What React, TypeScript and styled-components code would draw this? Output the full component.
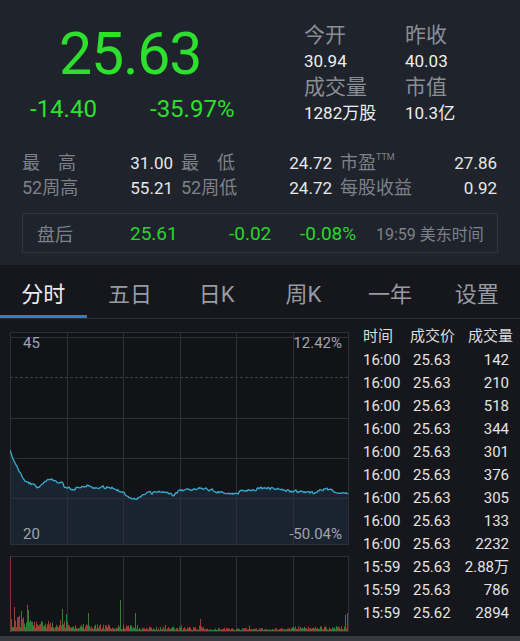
import styled, { createGlobalStyle } from "styled-components";

const GlobalStyle = createGlobalStyle`
  html, body {
    margin: 0;
    padding: 0;
    background: #15171c;
  }
  body {
    font-family: Roboto, "Noto Sans CJK SC", sans-serif;
  }
`;

const GREEN = "#2ee02e";
const W = 339;
const H = 213;
const VH = 76;

// seeded random so the chart is the same every run
function rng(seed: number) {
    let a = seed;
    return () => {
        a |= 0;
        a = (a + 0x6d2b79f5) | 0;
        let t = Math.imul(a ^ (a >>> 15), 1 | a);
        t = (t + Math.imul(t ^ (t >>> 7), 61 | t)) ^ t;
        return ((t ^ (t >>> 14)) >>> 0) / 4294967296;
    };
}

const keys: [number, number][] = [
    [0, 118], [3, 127], [9, 139], [15, 150], [20, 151], [28, 156], [35, 148], [45, 149],
    [52, 151], [55, 156], [63, 157], [73, 153], [90, 156], [103, 155], [115, 162], [125, 167],
    [137, 162], [153, 159], [163, 163], [170, 158], [190, 156], [223, 162], [235, 158],
    [257, 156], [280, 159], [303, 161], [315, 157], [338, 162],
];

function buildLine() {
    const r = rng(7);
    const pts: string[] = [];
    let k = 0;
    let n = 0;
    for (let x = 0; x <= W - 1; x += 1) {
        while (k < keys.length - 2 && keys[k + 1][0] < x) k++;
        const [x0, y0] = keys[k];
        const [x1, y1] = keys[k + 1];
        const t = Math.min(1, Math.max(0, (x - x0) / (x1 - x0)));
        n = n * 0.5 + (r() - 0.5) * 2.4;
        const y = y0 + (y1 - y0) * t + (x > 4 ? n : 0);
        pts.push(`${x},${y.toFixed(1)}`);
    }
    return pts;
}

const linePts = buildLine();

function buildBars() {
    const r = rng(31);
    const bars: { x: number; h: number; red: boolean }[] = [];
    const spikes: Record<number, number> = { 4: 24, 11: 20, 18: 21, 52: 22, 56: 17, 78: 18, 110: 31, 125: 18, 190: 12, 335: 16, 337: 18 };
    for (let x = 1; x < W - 1; x += 1) {
        const env = x < 20 ? 16 : x < 60 ? 11 : x < 130 ? 7 : x < 200 ? 4.5 : x < 280 ? 3 : 5;
        let h = env * (0.2 + r() * 0.8);
        if (r() > 0.94) h *= 1.8;
        if (spikes[x]) h = spikes[x];
        bars.push({ x, h: Math.max(1, h), red: r() > 0.5 });
    }
    return bars;
}

const bars = buildBars();
const vLines = [0, 1, 2, 3, 4, 5, 6].map((i) => Math.round((W / 6) * i));

const trades = [
    ["16:00", "25.63", "142"],
    ["16:00", "25.63", "210"],
    ["16:00", "25.63", "518"],
    ["16:00", "25.63", "344"],
    ["16:00", "25.63", "301"],
    ["16:00", "25.63", "376"],
    ["16:00", "25.63", "305"],
    ["16:00", "25.63", "133"],
    ["16:00", "25.63", "2232"],
    ["15:59", "25.63", "2.88万"],
    ["15:59", "25.63", "786"],
    ["15:59", "25.62", "2894"],
];

const tabs = ["分时", "五日", "日K", "周K", "一年", "设置"];

const Screen = styled.div`
    width: 520px;
    height: 641px;
    overflow: hidden;
    display: flex;
    flex-direction: column;
    background: #15171c;
`;

const Header = styled.section`
    background: #1f232b;
    height: 265px;
    flex-shrink: 0;
`;

const Quote = styled.div`
    display: flex;
    height: 140px;
`;

const PriceBlock = styled.div`
    width: 304px;
    padding-left: 30px;
    box-sizing: border-box;
`;

const Price = styled.div`
    font-size: 59px;
    line-height: 59px;
    color: ${GREEN};
    margin: 24px 0 0 29px;
    letter-spacing: -1.2px;
`;

const Changes = styled.div`
    display: flex;
    margin-top: 14px;
    font-size: 24px;
    line-height: 24px;
    color: ${GREEN};
`;

const Change = styled.span<{ $w?: number }>`
    width: ${(p) => (p.$w ? `${p.$w}px` : "auto")};
`;

const Facts = styled.div`
    display: grid;
    grid-template-columns: 101px 101px;
    grid-auto-rows: 26px;
    padding-top: 22px;
`;

const FactLabel = styled.div`
    font-size: 21px;
    line-height: 26px;
    color: #8a8e96;
`;

const FactValue = styled.div`
    font-size: 17px;
    line-height: 26px;
    color: #eeeeee;
`;

const Stats = styled.div`
    display: grid;
    grid-template-columns: 151px 151px 157px;
    column-gap: 8px;
    padding: 10px 0 0 22px;
`;

const Stat = styled.div`
    display: flex;
    justify-content: space-between;
    align-items: baseline;
    height: 25px;
    line-height: 25px;
`;

const StatLabel = styled.span`
    font-size: 18px;
    color: #7d8189;
`;

const StatValue = styled.span`
    font-size: 17px;
    color: #e8e8e8;
`;

const Sup = styled.sup`
    font-size: 9px;
    vertical-align: 9px;
    line-height: 0;
`;

const AfterHours = styled.div`
    margin: 13px 22px 0;
    height: 40px;
    border: 1px solid #30353e;
    box-sizing: border-box;
    display: flex;
    align-items: center;
    padding-left: 14px;
`;

const AhCell = styled.span<{ $w?: number; $green?: boolean; $size: number }>`
    width: ${(p) => (p.$w ? `${p.$w}px` : "auto")};
    font-size: ${(p) => p.$size}px;
    color: ${(p) => (p.$green ? "#27d827" : "#7d8189")};
    white-space: nowrap;
`;

const Tabs = styled.nav`
    display: flex;
    height: 54px;
    flex-shrink: 0;
    border-bottom: 1px solid #2a2e35;
    box-sizing: border-box;
`;

const Tab = styled.div<{ $active?: boolean }>`
    flex: 1;
    display: flex;
    align-items: center;
    justify-content: center;
    padding-top: 4px;
    font-size: 22px;
    color: ${(p) => (p.$active ? "#ececec" : "#979ba3")};
    border-bottom: 3px solid ${(p) => (p.$active ? "#2f7bd0" : "transparent")};
`;

const Body = styled.div`
    flex: 1;
    display: flex;
    gap: 13px;
    padding: 5px 0 0 10px;
`;

const ChartColumn = styled.div`
    width: ${W}px;
    padding-top: 8px;
    display: flex;
    flex-direction: column;
    gap: 11px;
`;

const ChartBox = styled.div`
    position: relative;
    width: ${W}px;
    height: ${H}px;
    background: #111317;
`;

const AxisLabel = styled.span<{ $right?: boolean; $bottom?: boolean }>`
    position: absolute;
    ${(p) => (p.$right ? "right: 7px;" : "left: 13px;")}
    ${(p) => (p.$bottom ? "bottom: 2px;" : "top: 2px;")}
    font-size: 15px;
    line-height: 18px;
    color: #a0a4ab;
`;

const VolumeBox = styled.div`
    width: ${W}px;
    height: ${VH}px;
    background: #111317;
`;

const TradeList = styled.div`
    width: 150px;
`;

const TradeRow = styled.div<{ $head?: boolean }>`
    display: grid;
    grid-template-columns: ${(p) => (p.$head ? "47px 52px 51px" : "50px 50px 46px")};
    height: ${(p) => (p.$head ? 25 : 23)}px;
    line-height: ${(p) => (p.$head ? 25 : 23)}px;
    font-size: 15px;
    color: ${(p) => (p.$head ? "#dcdcdc" : "#e4e4e4")};
    padding-left: 1px;
    white-space: nowrap;

    & > span:last-child {
        text-align: right;
    }
`;

const Footer = styled.div`
    height: 5px;
    flex-shrink: 0;
    background: #36393f;
`;

function PriceChart() {
    const line = linePts.join(" ");
    return (
        <ChartBox>
            <svg width={W} height={H} style={{ display: "block" }}>
                <path d={`M0,${H} L${linePts.join(" L")} L${W - 1},${H} Z`} fill="#1a2330" />
                {[86, 126, 166].map((y) => (
                    <line key={y} x1={0} x2={W} y1={y + 0.5} y2={y + 0.5} stroke="#2c3139" />
                ))}
                <line x1={0} x2={W} y1={5.5} y2={5.5} stroke="#2c3139" />
                <line x1={0} x2={W} y1={45.5} y2={45.5} stroke="#3a3f47" strokeDasharray="3 2" />
                {vLines.map((x) => (
                    <line key={x} x1={Math.min(x, W - 1) + 0.5} x2={Math.min(x, W - 1) + 0.5} y1={0} y2={H} stroke="#2c3139" />
                ))}
                <rect x={0.5} y={0.5} width={W - 1} height={H - 1} fill="none" stroke="#2c3139" />
                <polyline points={line} fill="none" stroke="#38acce" strokeWidth={1.3} />
            </svg>
            <AxisLabel>45</AxisLabel>
            <AxisLabel $right>12.42%</AxisLabel>
            <AxisLabel $bottom>20</AxisLabel>
            <AxisLabel $right $bottom>-50.04%</AxisLabel>
        </ChartBox>
    );
}

function VolumeChart() {
    return (
        <VolumeBox>
            <svg width={W} height={VH} style={{ display: "block" }}>
                {vLines.map((x) => (
                    <line key={x} x1={Math.min(x, W - 1) + 0.5} x2={Math.min(x, W - 1) + 0.5} y1={0} y2={VH} stroke="#2c3139" />
                ))}
                <rect x={0.5} y={0.5} width={W - 1} height={VH - 1} fill="none" stroke="#2c3139" />
                <rect x={0} y={0} width={1} height={VH} fill="#7a3a36" />
                {bars.map((b) => (
                    <rect
                        key={b.x}
                        x={b.x}
                        y={VH - 1 - b.h}
                        width={1}
                        height={b.h}
                        fill={b.red ? "#b8453b" : "#3a923a"}
                        opacity={0.85}
                    />
                ))}
            </svg>
        </VolumeBox>
    );
}

export default function App() {
    return (
        <Screen>
            <GlobalStyle />
            <Header>
                <Quote>
                    <PriceBlock>
                        <Price>25.63</Price>
                        <Changes>
                            <Change $w={120}>-14.40</Change>
                            <Change>-35.97%</Change>
                        </Changes>
                    </PriceBlock>
                    <Facts>
                        <FactLabel>今开</FactLabel>
                        <FactLabel>昨收</FactLabel>
                        <FactValue>30.94</FactValue>
                        <FactValue>40.03</FactValue>
                        <FactLabel>成交量</FactLabel>
                        <FactLabel>市值</FactLabel>
                        <FactValue>1282万股</FactValue>
                        <FactValue>10.3亿</FactValue>
                    </Facts>
                </Quote>
                <Stats>
                    <Stat>
                        <StatLabel>最　高</StatLabel>
                        <StatValue>31.00</StatValue>
                    </Stat>
                    <Stat>
                        <StatLabel>最　低</StatLabel>
                        <StatValue>24.72</StatValue>
                    </Stat>
                    <Stat>
                        <StatLabel>
                            市盈<Sup>TTM</Sup>
                        </StatLabel>
                        <StatValue>27.86</StatValue>
                    </Stat>
                    <Stat>
                        <StatLabel>52周高</StatLabel>
                        <StatValue>55.21</StatValue>
                    </Stat>
                    <Stat>
                        <StatLabel>52周低</StatLabel>
                        <StatValue>24.72</StatValue>
                    </Stat>
                    <Stat>
                        <StatLabel>每股收益</StatLabel>
                        <StatValue>0.92</StatValue>
                    </Stat>
                </Stats>
                <AfterHours>
                    <AhCell $w={93} $size={18}>盘后</AhCell>
                    <AhCell $w={99} $size={19} $green>25.61</AhCell>
                    <AhCell $w={71} $size={19} $green>-0.02</AhCell>
                    <AhCell $w={76} $size={19} $green>-0.08%</AhCell>
                    <AhCell $size={16}>19:59 美东时间</AhCell>
                </AfterHours>
            </Header>
            <Tabs>
                {tabs.map((t, i) => (
                    <Tab key={t} $active={i === 0}>
                        {t}
                    </Tab>
                ))}
            </Tabs>
            <Body>
                <ChartColumn>
                    <PriceChart />
                    <VolumeChart />
                </ChartColumn>
                <TradeList>
                    <TradeRow $head>
                        <span>时间</span>
                        <span>成交价</span>
                        <span>成交量</span>
                    </TradeRow>
                    {trades.map((r, i) => (
                        <TradeRow key={i}>
                            <span>{r[0]}</span>
                            <span>{r[1]}</span>
                            <span>{r[2]}</span>
                        </TradeRow>
                    ))}
                </TradeList>
            </Body>
            <Footer />
        </Screen>
    );
}
